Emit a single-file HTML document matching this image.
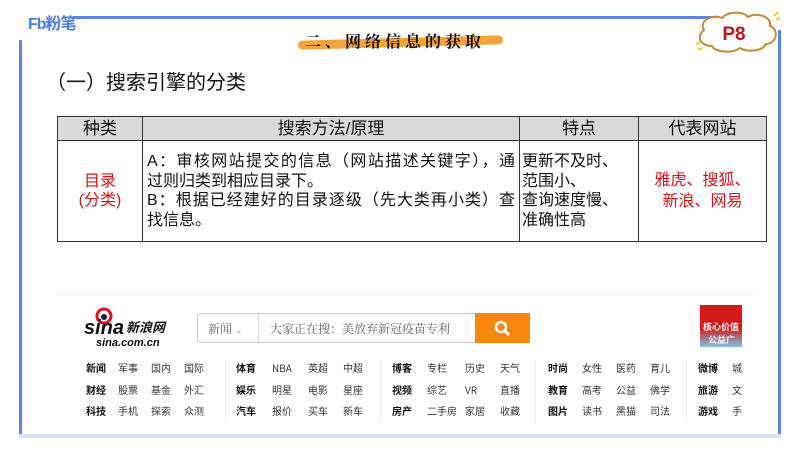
<!DOCTYPE html>
<html><head><meta charset="utf-8"><style>
*{margin:0;padding:0;box-sizing:border-box}
body{width:800px;height:450px;background:#fff;position:relative;overflow:hidden;font-family:"Liberation Sans","Noto Sans CJK SC",sans-serif;color:#111}
.abs{position:absolute}
table{border-collapse:collapse;position:absolute;left:57px;top:116px;width:710px;table-layout:fixed}
td{border:1px solid #333;font-size:16px;line-height:19.5px}
th{border:1px solid #333;background:#d9d9d9;font-weight:normal;font-size:17px;height:24px;line-height:22px}
.red{color:#d0161b}
.nav{position:absolute;font-size:10px;line-height:12px;height:12px;color:#333;font-family:"Noto Sans CJK SC",sans-serif}
.nav b{color:#111}
.j{text-align:justify;text-align-last:justify;white-space:nowrap}
</style></head><body>
<div class="abs" style="left:73px;top:16px;width:640px;height:3px;background:#5b86e5"></div>
<div class="abs" style="left:19px;top:40px;width:3px;height:398px;background:#5b86e5"></div>
<div class="abs" style="left:778px;top:30px;width:3px;height:408px;background:#5b86e5"></div>
<div class="abs" style="left:19px;top:434px;width:762px;height:4px;background:#d6e2f8"></div>
<div class="abs" style="left:28px;top:10px;font-size:16px;font-weight:bold;color:#4a7de0;letter-spacing:-1px">Fb粉笔</div>
<div class="abs" style="left:298px;top:38px;width:205px;height:9px;background:#f4a43a;border-radius:5px;transform:rotate(-1.5deg)"></div>
<div class="abs" style="left:305px;top:29px;font-size:16px;font-weight:bold;letter-spacing:4px;font-family:'Noto Serif CJK SC',serif">二、网络信息的获取</div>
<svg class="abs" style="left:692px;top:8px" width="90" height="48"><path d="M12 22 C6 12 22 6 30 10 C36 3 52 3 56 9 C64 4 80 8 78 18 C88 22 84 36 74 36 C70 44 54 44 48 40 C40 46 22 44 20 38 C8 38 4 28 12 22Z" fill="#fff" stroke="#c48a3a" stroke-width="2"/><text x="42" y="32" font-family="Liberation Sans" font-weight="bold" font-size="19" fill="#c0161b" text-anchor="middle">P8</text><path d="M82 8 L86 4 M84 12 L88 10 M8 34 L4 36 M10 40 L6 42" stroke="#e6d21e" stroke-width="2"/></svg>
<div class="abs" style="left:46px;top:66px;font-size:20px;color:#111">（一）搜索引擎的分类</div>
<table>
<tr><th style="width:85px">种类</th><th style="width:377px">搜索方法/原理</th><th style="width:119px">特点</th><th>代表网站</th></tr>
<tr style="height:101px"><td class="red" style="text-align:center;font-size:16px;line-height:19px">目录<br>(分类)</td>
<td style="padding:0 4px 0 4px"><div class="j">A：审核网站提交的信息（网站描述关键字），通</div><div>过则归类到相应目录下。</div><div class="j">B：根据已经建好的目录逐级（先大类再小类）查</div><div>找信息。</div></td>
<td style="padding:0 2px">更新不及时、<br>范围小、<br>查询速度慢、<br>准确性高</td>
<td class="red" style="text-align:center;font-size:16px;line-height:21px">雅虎、搜狐、<br>新浪、网易</td></tr>
</table>
<div class="abs" style="left:57px;top:294px;width:700px;height:1px;background:#eee"></div>
<svg class="abs" style="left:84px;top:304px" width="95" height="44"><circle cx="20" cy="12" r="7" fill="none" stroke="#e0141e" stroke-width="3"/><circle cx="20" cy="13" r="3" fill="#222"/><text x="0" y="30" font-family="Liberation Sans" font-style="italic" font-weight="bold" font-size="20" fill="#111">sina</text><text x="42" y="28" font-size="13" font-style="italic" font-weight="bold" font-family="Noto Sans CJK SC" fill="#111">新浪网</text><text x="12" y="42" font-size="11" font-style="italic" font-weight="bold" font-family="Liberation Sans" fill="#111">sina.com.cn</text></svg>
<div class="abs" style="left:197px;top:313px;width:278px;height:30px;border:1px solid #ccc;border-right:none;border-radius:3px 0 0 3px"></div>
<div class="abs" style="left:258px;top:314px;width:1px;height:28px;background:#ddd"></div>
<div class="abs" style="left:208px;top:320px;font-size:12px;color:#666;font-family:'Noto Serif CJK SC',serif">新闻 <span style="color:#f08a1c;font-size:9px">⌄</span></div>
<div class="abs" style="left:270px;top:320px;font-size:12px;color:#666;font-family:'Noto Serif CJK SC',serif">大家正在搜：美放弃新冠疫苗专利</div>
<div class="abs" style="left:475px;top:313px;width:55px;height:30px;background:#f7860f"></div>
<svg class="abs" style="left:493px;top:319px" width="20" height="20"><circle cx="8" cy="8" r="5" fill="none" stroke="#fff" stroke-width="2.5"/><path d="M11 11 L16 16" stroke="#fff" stroke-width="3"/></svg>
<div class="abs" style="left:700px;top:305px;width:42px;height:42px;background:linear-gradient(#d21a1a 55%,#7ec4ea)"></div>
<div class="abs" style="left:703px;top:320px;font-size:9px;color:#fff;font-weight:bold">核心价值<br>&nbsp;&nbsp;公益广</div>
<div class="abs" style="left:225px;top:360px;width:1px;height:62px;background:#eee"></div>
<div class="abs" style="left:380px;top:360px;width:1px;height:62px;background:#eee"></div>
<div class="abs" style="left:535px;top:360px;width:1px;height:62px;background:#eee"></div>
<div class="abs" style="left:686px;top:360px;width:1px;height:62px;background:#eee"></div>
<div id="nav"></div>
<script>
var rows=[["新闻","军事","国内","国际","体育","NBA","英超","中超","博客","专栏","历史","天气","时尚","女性","医药","育儿","微博","城"],
["财经","股票","基金","外汇","娱乐","明星","电影","星座","视频","综艺","VR","直播","教育","高考","公益","佛学","旅游","文"],
["科技","手机","探索","众测","汽车","报价","买车","新车","房产","二手房","家居","收藏","图片","读书","黑猫","司法","游戏","手"]];
var xs=[86,118,151,184,236,272,308,343,392,427,465,500,548,582,616,650,698,732];
var h="";rows.forEach(function(r,i){r.forEach(function(t,j){var b=(j%4==0);h+='<div class="nav" style="left:'+xs[j]+'px;top:'+(362+i*21.5)+'px">'+(b?'<b>'+t+'</b>':t)+'</div>';});});
document.getElementById("nav").innerHTML=h;
</script>
</body></html>
